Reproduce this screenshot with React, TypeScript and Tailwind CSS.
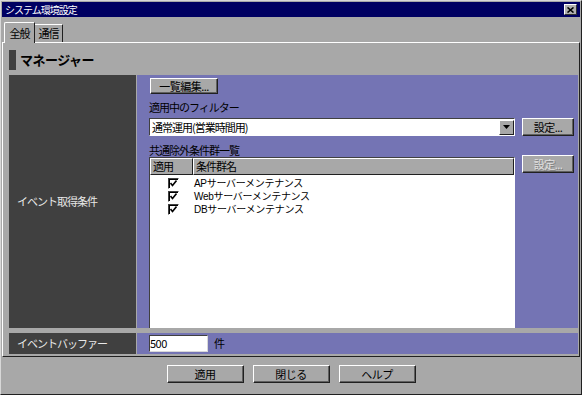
import React from "react";

const font = { fontFamily: '"Noto Sans CJK JP", "Noto Sans", sans-serif' };
const rowFont = { fontFamily: '"Liberation Sans", "Noto Sans CJK JP", sans-serif' };

function WinButton({
  children,
  className = "",
  disabled = false,
}: {
  children: React.ReactNode;
  className?: string;
  disabled?: boolean;
}) {
  return (
    <div
      className={`flex items-center justify-center bg-[#a8a8a8] border border-t-white border-l-white border-r-[#202020] border-b-[#202020] shadow-[inset_-1px_-1px_0_#606060] text-[11px] tracking-[-0.5px] leading-none ${
        disabled ? "text-[#e0e0e0] [text-shadow:1px_1px_0_#808080]" : "text-black"
      } ${className}`}
    >
      {children}
    </div>
  );
}

function Check() {
  return (
    <div className="w-[11px] h-[11px] bg-white border border-t-[#404040] border-l-[#404040] border-r-white border-b-white shadow-[inset_1px_1px_0_#000] flex items-center justify-center">
      <svg width="7" height="7" viewBox="0 0 7 7">
        <path d="M0.5 3 L2.5 5.5 L6.5 0.5" stroke="#000" strokeWidth="1.6" fill="none" />
      </svg>
    </div>
  );
}

const rows = ["APサーバーメンテナンス", "Webサーバーメンテナンス", "DBサーバーメンテナンス"];

export default function App() {
  return (
    <div
      style={font}
      className="w-[582px] h-[395px] bg-[#a8a8a8] border border-t-[#d8d8d8] border-l-[#d8d8d8] border-r-[#202020] border-b-[#202020] flex flex-col overflow-hidden text-[11px] tracking-[-1px]"
    >
      {/* title bar */}
      <div className="mx-[1px] mt-[1px] h-[15px] bg-[#000062] flex items-center justify-between pl-[3px] pr-[3px]">
        <span className="text-white text-[10px] tracking-[-1px] leading-none">システム環境設定</span>
        <div className="w-[13px] h-[11px] bg-[#b0b0b0] border border-t-white border-l-white border-r-[#303030] border-b-[#303030] flex items-center justify-center">
          <svg width="7" height="6" viewBox="0 0 7 6">
            <path d="M0.5 0.5 L6.5 5.5 M6.5 0.5 L0.5 5.5" stroke="#000" strokeWidth="1.6" />
          </svg>
        </div>
      </div>

      {/* tabs */}
      <div className="flex items-end pl-[3px] mt-[5px] h-[20px]">
        <div className="relative z-10 w-[31px] h-[21px] -mb-[1px] bg-[#a8a8a8] border border-b-0 border-t-white border-l-white border-r-[#202020] rounded-tl-[2px] flex items-center justify-center">
          全般
        </div>
        <div className="w-[28px] h-[18px] border border-b-0 border-t-white border-l-0 border-r-[#202020] flex items-center justify-center">
          通信
        </div>
      </div>

      {/* tab panel */}
      <div className="mx-[1px] h-[315px] border border-t-white border-l-white border-r-[#202020] border-b-[#202020] px-[6px] pt-[6px] flex flex-col">
        <div className="flex items-center h-[21px] gap-[4px]">
          <div className="w-[7px] h-[20px] bg-[#404040]" />
          <span className="text-[13px] font-bold tracking-[-0.5px]">マネージャー</span>
        </div>

        <div className="mt-[5px] grid grid-cols-[127px_1fr] gap-x-[1px] gap-y-[5px]">
          <div className="bg-[#404040] h-[253px] flex items-center pl-[8px] text-[#e8e8e8]">
            イベント取得条件
          </div>
          <div className="bg-[#7474b4] h-[253px] pl-[12px] pr-[4px] pt-[3px] flex flex-col">
            <WinButton className="w-[68px] h-[17px] ml-[1px]">一覧編集...</WinButton>
            <div className="mt-[7px] h-[13px] leading-[13px]">適用中のフィルター</div>
            <div className="mt-[4px] flex gap-[7px]">
              <div className="w-[366px] h-[18px] bg-white border border-t-[#404040] border-l-[#404040] border-r-white border-b-white flex items-center justify-between">
                <span className="pl-[2px] leading-none">通常運用(営業時間用)</span>
                <div className="w-[15px] h-[15px] bg-[#a8a8a8] border border-t-white border-l-white border-r-[#202020] border-b-[#202020] flex items-center justify-center">
                  <svg width="7" height="4" viewBox="0 0 7 4">
                    <path d="M0 0 H7 L3.5 4 Z" fill="#000" />
                  </svg>
                </div>
              </div>
              <WinButton className="w-[52px] h-[18px]">設定...</WinButton>
            </div>
            <div className="mt-[8px] h-[13px] leading-[13px]">共通除外条件群一覧</div>
            <div className="mt-[-2px] flex gap-[7px] flex-1 items-start">
              <div className="w-[366px] mt-[2px] h-[171px] bg-white border border-t-[#404040] border-l-[#404040] border-r-white border-b-0 flex flex-col">
                <div className="flex h-[17px] shrink-0">
                  <div className="w-[43px] bg-[#a8a8a8] border border-t-white border-l-white border-r-[#202020] border-b-[#202020] flex items-center pl-[2px] leading-none">
                    適用
                  </div>
                  <div className="flex-1 bg-[#a8a8a8] border border-t-white border-l-white border-r-[#202020] border-b-[#202020] flex items-center pl-[2px] leading-none">
                    条件群名
                  </div>
                </div>
                <div className="pt-[2px] flex flex-col">
                  {rows.map((r) => (
                    <div key={r} className="flex items-center h-[13px]">
                      <div className="w-[43px] flex justify-center pl-[3px]">
                        <Check />
                      </div>
                      <span style={rowFont} className="pl-[1px] text-[10px] tracking-[-0.3px] leading-[12px]">
                        {r}
                      </span>
                    </div>
                  ))}
                </div>
              </div>
              <WinButton disabled className="w-[52px] h-[18px]">
                設定...
              </WinButton>
            </div>
          </div>

          <div className="bg-[#404040] h-[21px] flex items-center pl-[8px] text-[#e8e8e8]">
            イベントバッファー
          </div>
          <div className="bg-[#7474b4] h-[21px] pl-[12px] flex items-center gap-[6px]">
            <div className="w-[59px] h-[17px] bg-white border border-t-[#404040] border-l-[#404040] border-r-[#d8d8d8] border-b-[#d8d8d8] flex items-center leading-none tracking-[-0.5px]">
              500
            </div>
            <span>件</span>
          </div>
        </div>
      </div>

      {/* bottom buttons */}
      <div className="flex justify-center gap-[9px] mt-[8px]">
        <WinButton className="w-[77px] h-[18px]">適用</WinButton>
        <WinButton className="w-[77px] h-[18px]">閉じる</WinButton>
        <WinButton className="w-[77px] h-[18px]">ヘルプ</WinButton>
      </div>
    </div>
  );
}
